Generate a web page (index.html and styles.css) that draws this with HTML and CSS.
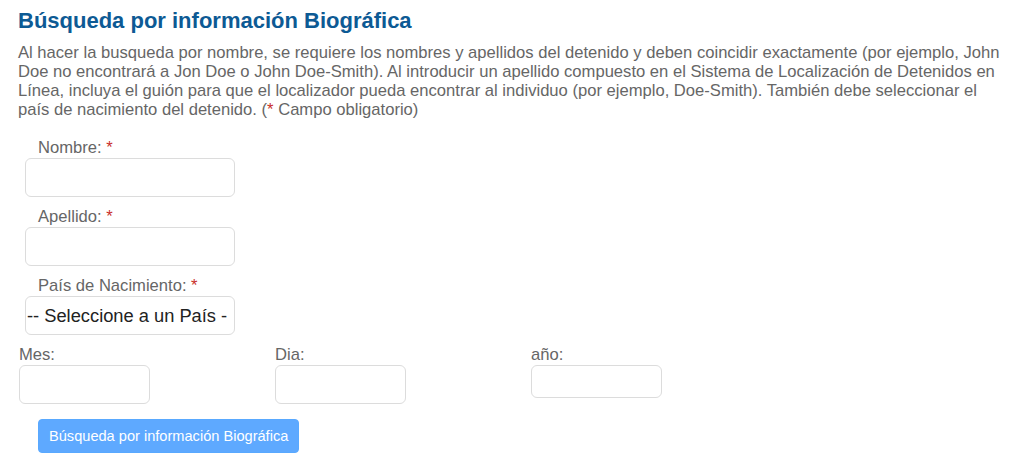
FILE: index.html
```html
<!DOCTYPE html>
<html lang="es">
<head>
    <meta charset="UTF-8">
    <meta name="viewport" content="width=device-width, initial-scale=1.0">
    <title>Búsqueda por información Biográfica</title>
    <link rel="stylesheet" href="styles.css">
</head>
<body>
    <main class="search-page">
        <h1 class="page-title">Búsqueda por información Biográfica</h1>
        <p class="intro">Al hacer la busqueda por nombre, se requiere los nombres y apellidos del detenido y deben coincidir exactamente (por ejemplo, John Doe no encontrará a Jon Doe o John Doe-Smith). Al introducir un apellido compuesto en el Sistema de Localización de Detenidos en Línea, incluya el guión para que el localizador pueda encontrar al individuo (por ejemplo, Doe-Smith). También debe seleccionar el país de nacimiento del detenido. (<span class="req">*</span> Campo obligatorio)</p>

        <form class="bio-form">
            <div class="field">
                <label for="nombre">Nombre: <span class="req">*</span></label>
                <input type="text" id="nombre" class="text-input">
            </div>
            <div class="field">
                <label for="apellido">Apellido: <span class="req">*</span></label>
                <input type="text" id="apellido" class="text-input">
            </div>
            <div class="field">
                <label for="pais">País de Nacimiento: <span class="req">*</span></label>
                <select id="pais" class="text-input country-select">
                    <option>-- Seleccione a un País -</option>
                </select>
            </div>

            <div class="date-row">
                <div class="date-col">
                    <label for="mes">Mes:</label>
                    <input type="text" id="mes" class="date-input">
                </div>
                <div class="date-col">
                    <label for="dia">Dia:</label>
                    <input type="text" id="dia" class="date-input">
                </div>
                <div class="date-col">
                    <label for="anio">año:</label>
                    <input type="text" id="anio" class="date-input short">
                </div>
            </div>

            <button type="submit" class="search-btn" disabled>Búsqueda por información Biográfica</button>
        </form>
    </main>
</body>
</html>
```

FILE: styles.css
```css
body {
    font-family: 'Liberation Sans', Arial, sans-serif;
    background: #fff;
    color: #666;
    margin: 0;
    padding: 0;
}

.search-page {
    padding: 8px 12px 0 18px;
}

.page-title {
    margin: 0;
    font-size: 22px;
    line-height: 25px;
    color: #0d5a94;
}

.intro {
    margin: 10px 0 0;
    font-size: 16.6px;
    line-height: 19px;
    color: #666;
}

.req {
    color: #c9302c;
}

.bio-form {
    margin-top: 19px;
}

.field {
    padding-left: 7px;
    margin-bottom: 10px;
}

.field label {
    display: block;
    padding-left: 13px;
    font-size: 16.6px;
    line-height: 20px;
}

.text-input {
    display: block;
    box-sizing: border-box;
    width: 210px;
    height: 39px;
    margin: 0;
    padding: 0 6px;
    border: 1px solid #dcdcdc;
    border-radius: 6px;
    background: #fff;
    font-family: 'Liberation Sans', Arial, sans-serif;
    font-size: 16px;
    color: #222;
}

.country-select {
    appearance: none;
    -webkit-appearance: none;
    padding: 0 0 0 1px;
    font-size: 18.3px;
    overflow: hidden;
}

.date-row {
    display: grid;
    grid-template-columns: 256px 256px 256px;
    margin-left: 1px;
    margin-top: 1px;
}

.date-col label {
    display: block;
    font-size: 16.6px;
    line-height: 20px;
}

.date-input {
    display: block;
    box-sizing: border-box;
    width: 131px;
    height: 39px;
    margin: 0;
    border: 1px solid #dcdcdc;
    border-radius: 6px;
    background: #fff;
}

.date-input.short {
    height: 33px;
}

.search-btn {
    margin: 15px 0 0 20px;
    height: 34px;
    padding: 0 10px;
    border: 1px solid #59a9ff;
    border-radius: 4px;
    background: #5ea9ff;
    color: #fff;
    font-family: 'Liberation Sans', Arial, sans-serif;
    font-size: 14.6px;
}
```
